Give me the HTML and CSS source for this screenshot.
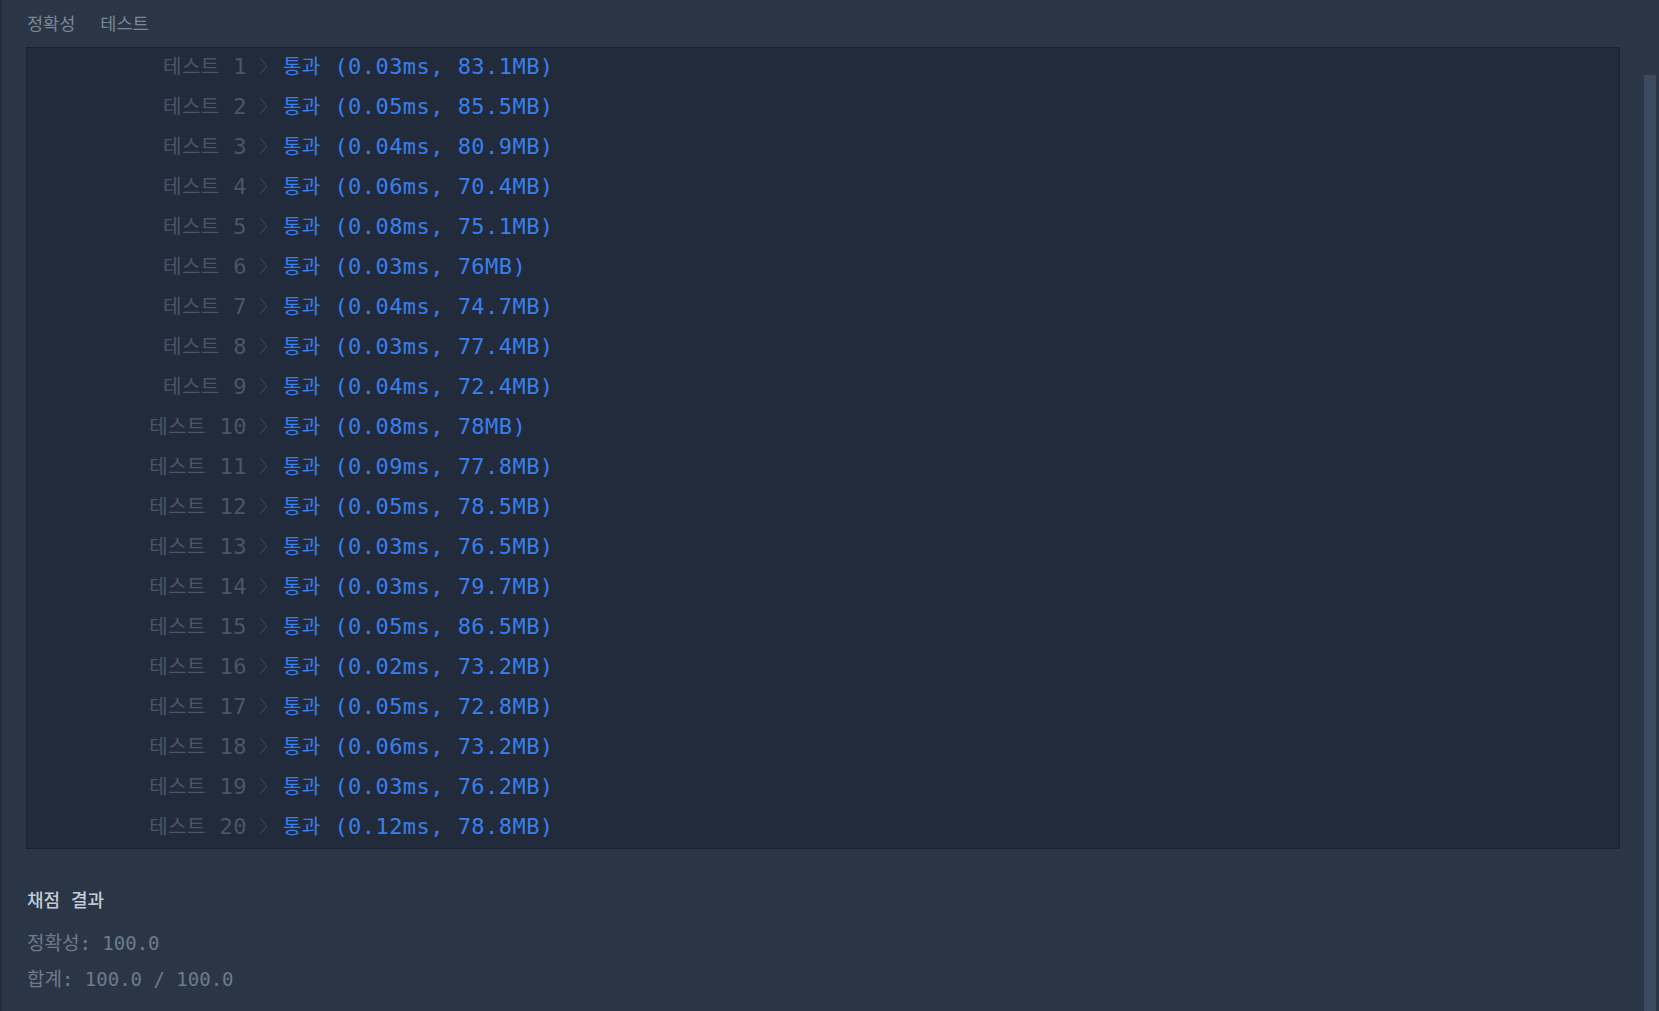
FILE: index.html
```html
<!DOCTYPE html>
<html lang="ko">
<head>
<meta charset="utf-8">
<title>채점 결과</title>
<link rel="stylesheet" href="styles.css">
</head>
<body>
<div class="page">
  <main class="content">
    <div class="tabs"><span class="tab">정확성</span><span class="tab">테스트</span></div>
    <div class="results">
      <div class="row"><span class="label"><span class="ko">테스트</span> 1</span><svg class="chev" viewBox="0 0 9 18"><path d="M1 1 L8 9 L1 17"/></svg><span class="res"><span class="ko">통과</span> (0.03ms, 83.1MB)</span></div>
      <div class="row"><span class="label"><span class="ko">테스트</span> 2</span><svg class="chev" viewBox="0 0 9 18"><path d="M1 1 L8 9 L1 17"/></svg><span class="res"><span class="ko">통과</span> (0.05ms, 85.5MB)</span></div>
      <div class="row"><span class="label"><span class="ko">테스트</span> 3</span><svg class="chev" viewBox="0 0 9 18"><path d="M1 1 L8 9 L1 17"/></svg><span class="res"><span class="ko">통과</span> (0.04ms, 80.9MB)</span></div>
      <div class="row"><span class="label"><span class="ko">테스트</span> 4</span><svg class="chev" viewBox="0 0 9 18"><path d="M1 1 L8 9 L1 17"/></svg><span class="res"><span class="ko">통과</span> (0.06ms, 70.4MB)</span></div>
      <div class="row"><span class="label"><span class="ko">테스트</span> 5</span><svg class="chev" viewBox="0 0 9 18"><path d="M1 1 L8 9 L1 17"/></svg><span class="res"><span class="ko">통과</span> (0.08ms, 75.1MB)</span></div>
      <div class="row"><span class="label"><span class="ko">테스트</span> 6</span><svg class="chev" viewBox="0 0 9 18"><path d="M1 1 L8 9 L1 17"/></svg><span class="res"><span class="ko">통과</span> (0.03ms, 76MB)</span></div>
      <div class="row"><span class="label"><span class="ko">테스트</span> 7</span><svg class="chev" viewBox="0 0 9 18"><path d="M1 1 L8 9 L1 17"/></svg><span class="res"><span class="ko">통과</span> (0.04ms, 74.7MB)</span></div>
      <div class="row"><span class="label"><span class="ko">테스트</span> 8</span><svg class="chev" viewBox="0 0 9 18"><path d="M1 1 L8 9 L1 17"/></svg><span class="res"><span class="ko">통과</span> (0.03ms, 77.4MB)</span></div>
      <div class="row"><span class="label"><span class="ko">테스트</span> 9</span><svg class="chev" viewBox="0 0 9 18"><path d="M1 1 L8 9 L1 17"/></svg><span class="res"><span class="ko">통과</span> (0.04ms, 72.4MB)</span></div>
      <div class="row"><span class="label"><span class="ko">테스트</span> 10</span><svg class="chev" viewBox="0 0 9 18"><path d="M1 1 L8 9 L1 17"/></svg><span class="res"><span class="ko">통과</span> (0.08ms, 78MB)</span></div>
      <div class="row"><span class="label"><span class="ko">테스트</span> 11</span><svg class="chev" viewBox="0 0 9 18"><path d="M1 1 L8 9 L1 17"/></svg><span class="res"><span class="ko">통과</span> (0.09ms, 77.8MB)</span></div>
      <div class="row"><span class="label"><span class="ko">테스트</span> 12</span><svg class="chev" viewBox="0 0 9 18"><path d="M1 1 L8 9 L1 17"/></svg><span class="res"><span class="ko">통과</span> (0.05ms, 78.5MB)</span></div>
      <div class="row"><span class="label"><span class="ko">테스트</span> 13</span><svg class="chev" viewBox="0 0 9 18"><path d="M1 1 L8 9 L1 17"/></svg><span class="res"><span class="ko">통과</span> (0.03ms, 76.5MB)</span></div>
      <div class="row"><span class="label"><span class="ko">테스트</span> 14</span><svg class="chev" viewBox="0 0 9 18"><path d="M1 1 L8 9 L1 17"/></svg><span class="res"><span class="ko">통과</span> (0.03ms, 79.7MB)</span></div>
      <div class="row"><span class="label"><span class="ko">테스트</span> 15</span><svg class="chev" viewBox="0 0 9 18"><path d="M1 1 L8 9 L1 17"/></svg><span class="res"><span class="ko">통과</span> (0.05ms, 86.5MB)</span></div>
      <div class="row"><span class="label"><span class="ko">테스트</span> 16</span><svg class="chev" viewBox="0 0 9 18"><path d="M1 1 L8 9 L1 17"/></svg><span class="res"><span class="ko">통과</span> (0.02ms, 73.2MB)</span></div>
      <div class="row"><span class="label"><span class="ko">테스트</span> 17</span><svg class="chev" viewBox="0 0 9 18"><path d="M1 1 L8 9 L1 17"/></svg><span class="res"><span class="ko">통과</span> (0.05ms, 72.8MB)</span></div>
      <div class="row"><span class="label"><span class="ko">테스트</span> 18</span><svg class="chev" viewBox="0 0 9 18"><path d="M1 1 L8 9 L1 17"/></svg><span class="res"><span class="ko">통과</span> (0.06ms, 73.2MB)</span></div>
      <div class="row"><span class="label"><span class="ko">테스트</span> 19</span><svg class="chev" viewBox="0 0 9 18"><path d="M1 1 L8 9 L1 17"/></svg><span class="res"><span class="ko">통과</span> (0.03ms, 76.2MB)</span></div>
      <div class="row"><span class="label"><span class="ko">테스트</span> 20</span><svg class="chev" viewBox="0 0 9 18"><path d="M1 1 L8 9 L1 17"/></svg><span class="res"><span class="ko">통과</span> (0.12ms, 78.8MB)</span></div>
    </div>
    <section class="summary">
      <h4 class="summary-title">채점 결과</h4>
      <p class="score">정확성: 100.0</p>
      <p class="score">합계: 100.0 / 100.0</p>
    </section>
  </main>
  <div class="scroll-track"><div class="scroll-thumb"></div></div>
</div>
</body>
</html>
```

FILE: styles.css
```css
html, body {
  margin: 0;
  padding: 0;
  height: 100%;
  background: #2a3646;
  overflow: hidden;
}
.page {
  display: flex;
  height: 1011px;
  border-left: 2px solid #222b38;
  box-sizing: border-box;
}
.content {
  flex: 1;
  padding: 0 24px 0 24px;
  font-family: "DejaVu Sans Mono", "Noto Sans CJK KR", monospace;
}
.tabs {
  display: flex;
  gap: 25px;
  height: 47px;
  align-items: center;
  padding-left: 1px;
  padding-bottom: 2px;
  box-sizing: border-box;
  font-family: "Noto Sans CJK KR", sans-serif;
  font-size: 17.5px;
  color: #7b8796;
}
.results {
  background: #222b3b;
  border: 1px solid #1a2230;
}
.row {
  display: flex;
  align-items: center;
  height: 40px;
  padding-bottom: 5px;
  box-sizing: border-box;
  font-size: 22px;
  letter-spacing: 0.45px;
  white-space: pre;
}
.ko {
  font-family: "Noto Sans CJK KR", sans-serif;
  font-size: 20px;
}
.label {
  width: 220px;
  text-align: right;
  color: #4b5667;
}
.chev {
  width: 9px;
  height: 18px;
  margin-left: 12px;
  margin-right: 15px;
  fill: none;
  stroke: #364151;
  stroke-width: 1.2;
}
.res {
  color: #3a7fec;
}
.summary {
  padding-top: 36px;
  padding-left: 1px;
}
.summary-title {
  margin: 0 0 8px;
  font-size: 18px;
  font-weight: 500;
  color: #c3cbd5;
  line-height: 32px;
}
.score {
  margin: 0;
  font-size: 19px;
  color: #6d7b8c;
  line-height: 36px;
}
.scroll-track {
  width: 15px;
  padding-top: 75px;
  box-sizing: border-box;
}
.scroll-thumb {
  width: 12px;
  height: 100%;
  background: #3b4a5e;
}
```
